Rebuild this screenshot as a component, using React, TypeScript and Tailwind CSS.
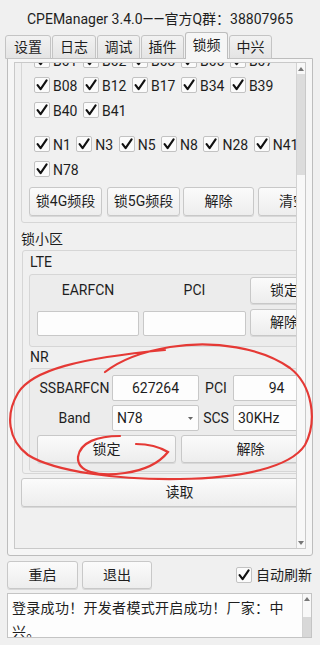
import React from "react";
import clsx from "clsx";

const bandsB = ["B01", "B02", "B03", "B05", "B07", "B08", "B12", "B17", "B34", "B39", "B40", "B41"];
const bandsN = ["N1", "N3", "N5", "N8", "N28", "N41", "N78"];
const tabs = [
  { name: "设置", w: "w-[46px]" },
  { name: "日志", w: "w-[44px]" },
  { name: "调试", w: "w-[43px]" },
  { name: "插件", w: "w-[43px]" },
  { name: "锁频", w: "w-[43px]", active: true },
  { name: "中兴", w: "w-[43px]" },
];

const Box = () => (
  <div className="w-[16px] h-[16px] shrink-0 border border-[#c2c2c2] rounded-[2px] bg-[#fbfbfb] flex items-center justify-center">
    <svg width="12" height="12" viewBox="0 0 12 12">
      <path d="M1.6 6.2 L4.6 10.2 L10.6 1.4" fill="none" stroke="#111" strokeWidth="2.1" strokeLinecap="round" strokeLinejoin="round" />
    </svg>
  </div>
);

const Check = ({ label }: { label: string }) => (
  <div className="flex items-center h-[16px]">
    <Box />
    <span className="ml-[3px] mt-[2px] leading-[16px]">{label}</span>
  </div>
);

const Btn = ({ children, className }: { children: React.ReactNode; className?: string }) => (
  <div
    className={clsx(
      "shrink-0 flex items-center justify-center border border-[#c8c8c8] rounded-[3px] bg-linear-to-b from-[#fbfbfb] to-[#ededed] shadow-[0_1px_0_#d8d8d8] whitespace-nowrap",
      className
    )}
  >
    {children}
  </div>
);

const Field = ({ children, className }: { children?: React.ReactNode; className?: string }) => (
  <div className={clsx("shrink-0 flex items-center border border-[#c8c8c8] rounded-[2px] bg-[#fdfdfd]", className)}>
    {children}
  </div>
);

const Arrow = ({ up }: { up?: boolean }) => (
  <svg width="6" height="4" viewBox="0 0 6 4">
    <path d={up ? "M0 4 L3 0 L6 4 Z" : "M0 0 L3 4 L6 0 Z"} fill="#777" />
  </svg>
);

export default function App() {
  return (
    <div className="relative w-[320px] h-[645px] overflow-hidden bg-[#f0f0f0] text-[#1e1e1e] text-[14px] font-[Roboto,'Noto_Sans_CJK_SC',sans-serif]">
      {/* title */}
      <div className="h-[32px] pt-[10px] text-center leading-[18px]">CPEManager 3.4.0——官方Q群：38807965</div>

      {/* tabs */}
      <div className="relative z-10 h-[27px] mb-[-1px] flex items-end gap-[1px] pl-[5px]">
        {tabs.map((t) =>
          t.active ? (
            <div
              key={t.name}
              className={clsx(t.w, "h-[27px] pb-[1px] flex items-center justify-center border border-b-0 border-[#bdbdbd] rounded-t-[3px] bg-[#f6f6f6]")}
            >
              {t.name}
            </div>
          ) : (
            <div
              key={t.name}
              className={clsx(t.w, "h-[24px] flex items-center justify-center border border-[#c4c4c4] rounded-t-[3px] bg-linear-to-b from-[#f2f2f2] to-[#e4e4e4]")}
            >
              {t.name}
            </div>
          )
        )}
      </div>

      {/* tab panel */}
      <div className="ml-[7px] w-[306px] h-[498px] border border-[#bdbdbd] rounded-b-[3px] bg-[#f6f6f6] pt-[3px] pl-[6px]">
        <div className="w-[292px] h-[487px] border border-[#c9c9c9] flex bg-[#f0f0f0]">
          <div className="w-[281px] h-full overflow-hidden">
            <div className="w-[340px] mt-[-22px]">
              {/* band group */}
              <div className="ml-[6px] w-[317px] border border-[#d6d6d6] rounded-[3px] pt-[10px] pb-[6px]">
                <div className="pl-[12px]">
                  <div className="w-[276px] flex flex-wrap gap-x-[5.5px] gap-y-[9px]">
                    {bandsB.map((b) => (
                      <Check key={b} label={b} />
                    ))}
                  </div>
                  <div className="mt-[18px] w-[276px] flex flex-wrap gap-x-[5.5px] gap-y-[9px]">
                    {bandsN.map((b) => (
                      <Check key={b} label={b} />
                    ))}
                  </div>
                </div>
                <div className="mt-[10px] pl-[7px] flex">
                  <Btn className="w-[73px] h-[29px]">锁4G频段</Btn>
                  <Btn className="ml-[5px] w-[73px] h-[29px]">锁5G频段</Btn>
                  <Btn className="ml-[3px] w-[71px] h-[29px]">解除</Btn>
                  <Btn className="ml-[4px] w-[70px] h-[29px]">清空</Btn>
                </div>
              </div>

              {/* lock cell */}
              <div className="mt-[6px] ml-[6px] h-[20px] leading-[20px]">锁小区</div>
              <div className="mt-[1px] ml-[7px] w-[330px] border border-[#d6d6d6] rounded-[3px] pl-[6px] pb-[1px]">
                <div className="mt-[1px] h-[20px] leading-[20px] pl-[1px]">LTE</div>
                <div className="mt-[2px] border border-[#d6d6d6] rounded-[3px] bg-[#ececec] pl-[7px] pt-[2px] pb-[10px]">
                  <div className="flex gap-[4px] h-[27px] items-center">
                    <div className="w-[102px] text-center">EARFCN</div>
                    <div className="w-[103px] text-center">PCI</div>
                    <Btn className="w-[68px] h-[27px]">锁定</Btn>
                  </div>
                  <div className="mt-[5px] flex gap-[4px] h-[27px] items-end">
                    <Field className="w-[102px] h-[25px]" />
                    <Field className="w-[103px] h-[25px]" />
                    <Btn className="w-[68px] h-[27px]">解除</Btn>
                  </div>
                </div>

                <div className="h-[20px] leading-[20px] pl-[1px]">NR</div>
                <div className="mt-[1px] border border-[#d6d6d6] rounded-[3px] bg-[#ececec] pl-[7px] pt-[6px] pb-[8px]">
                  <div className="flex h-[26px] items-center">
                    <div className="w-[75px] text-center">SSBARFCN</div>
                    <Field className="w-[87px] h-[26px] justify-center">627264</Field>
                    <div className="w-[34px] text-center">PCI</div>
                    <Field className="w-[87px] h-[26px] justify-center">94</Field>
                  </div>
                  <div className="mt-[4px] flex h-[26px] items-center">
                    <div className="w-[75px] text-center">Band</div>
                    <Field className="w-[87px] h-[26px] pl-[4px] pr-[5px] justify-between">
                      <span>N78</span>
                      <svg width="5" height="3" viewBox="0 0 5 3">
                        <path d="M0 0 L2.5 3 L5 0 Z" fill="#666" />
                      </svg>
                    </Field>
                    <div className="w-[34px] text-center">SCS</div>
                    <Field className="w-[87px] h-[26px] pl-[4px]">30KHz</Field>
                  </div>
                  <div className="mt-[4px] flex gap-[5px]">
                    <Btn className="w-[139px] h-[28px]">锁定</Btn>
                    <Btn className="w-[139px] h-[28px]">解除</Btn>
                  </div>
                </div>
              </div>

              <Btn className="mt-[4px] ml-[6px] w-[317px] h-[29px]">读取</Btn>
            </div>
          </div>

          {/* scrollbar */}
          <div className="w-[9px] h-full border-l border-[#d2d2d2] bg-[#f8f8f8] flex flex-col">
            <div className="h-[11px] flex items-center justify-center">
              <Arrow up />
            </div>
            <div className="h-[101px] bg-[#dcdcdc]" />
            <div className="flex-1" />
            <div className="h-[11px] flex items-center justify-center">
              <Arrow />
            </div>
          </div>
        </div>
      </div>

      {/* bottom controls */}
      <div className="mt-[5px] h-[28px] flex items-center pl-[7px] pr-[8px]">
        <Btn className="w-[71px] h-[28px]">重启</Btn>
        <Btn className="ml-[4px] w-[70px] h-[28px]">退出</Btn>
        <div className="flex-1" />
        <div className="flex items-center">
          <Box />
          <span className="ml-[4px]">自动刷新</span>
        </div>
      </div>

      {/* log */}
      <div className="mt-[4px] ml-[7px] w-[305px] h-[45px] border border-[#c4c4c4] bg-[#fdfdfd] flex overflow-hidden">
        <div className="w-[286px] pl-[4px] pt-[2px] leading-[24px] tracking-[0.3px]">
          <div className="w-[280px]">登录成功！开发者模式开启成功！厂家：中兴。</div>
        </div>
        <div className="ml-auto w-[9px] h-full border-l border-[#d2d2d2] bg-[#f8f8f8] flex flex-col">
          <div className="h-[9px] flex items-center justify-center">
            <Arrow up />
          </div>
          <div className="flex-1" />
          <div className="h-[20px] bg-[#d8d8d8]" />
        </div>
      </div>

      {/* red hand-drawn annotation */}
      <svg className="absolute left-0 top-0 z-20 pointer-events-none" width="320" height="645" viewBox="0 0 320 645">
        <path
          d="M105 372 C118 362, 140 352, 170 347 C215 340, 262 348, 290 368 C312 385, 318 420, 305 445 C290 468, 240 478, 180 479 C120 480, 55 472, 28 455 C8 440, 5 415, 18 393 C32 370, 80 358, 165 350"
          fill="none"
          stroke="#e53935"
          strokeWidth="2.2"
          strokeLinecap="round"
        />
        <path
          d="M120 436 C98 436, 80 442, 78 457 C77 472, 98 477, 125 473 C146 470, 160 462, 168 452 C158 446, 146 444, 136 444"
          fill="none"
          stroke="#e53935"
          strokeWidth="2.2"
          strokeLinecap="round"
        />
      </svg>
    </div>
  );
}
